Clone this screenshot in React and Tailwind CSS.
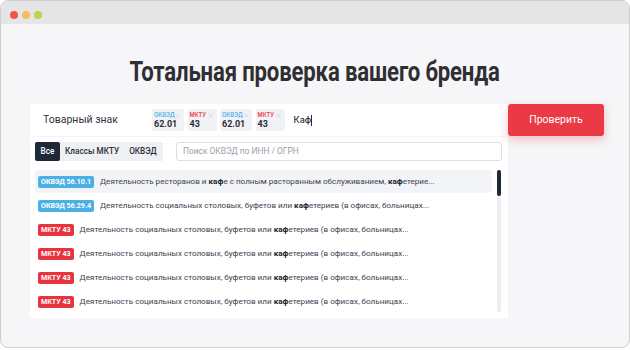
import { X } from 'lucide-react'

const CHIPS = [
  { type: 'ОКВЭД', code: '62.01', color: 'text-[#4cb0e6]', w: 'w-[32px]' },
  { type: 'МКТУ', code: '43', color: 'text-[#ec3a4a]', w: 'w-[29px]' },
  { type: 'ОКВЭД', code: '62.01', color: 'text-[#4cb0e6]', w: 'w-[32px]' },
  { type: 'МКТУ', code: '43', color: 'text-[#ec3a4a]', w: 'w-[29px]' },
]

const SOCIAL = ['Деятельность социальных столовых, буфетов или ', 'етериев (в офисах, больницах...']

const ROWS = [
  {
    badge: 'ОКВЭД 56.10.1',
    kind: 'okved',
    parts: ['Деятельность ресторанов и ', 'е с полным расторанным обслуживанием, ', 'етерие...'],
    active: true,
  },
  { badge: 'ОКВЭД 56.29.4', kind: 'okved', parts: SOCIAL },
  { badge: 'МКТУ 43', kind: 'mktu', parts: SOCIAL },
  { badge: 'МКТУ 43', kind: 'mktu', parts: SOCIAL },
  { badge: 'МКТУ 43', kind: 'mktu', parts: SOCIAL },
  { badge: 'МКТУ 43', kind: 'mktu', parts: SOCIAL },
]

function Row({ row }) {
  return (
    <div
      className={`flex items-center h-[23px] pl-[3px] rounded-[4px] mb-px font-['Roboto',sans-serif] ${row.active ? 'bg-[#f3f4f8]' : ''}`}
    >
      <span
        className={`h-[12px] px-[3px] rounded-[2px] text-white font-bold text-[7.1px] leading-[12px] whitespace-nowrap ${
          row.kind === 'okved' ? 'bg-[#4cb0e6]' : 'bg-[#e8343f]'
        }`}
      >
        {row.badge}
      </span>
      <span className="ml-[6px] text-[8.1px] text-[#3d4150] whitespace-nowrap">
        {row.parts.map((p, i) => (
          <span key={i}>
            {p}
            {i < row.parts.length - 1 && <b className="text-[#1c2230]">каф</b>}
          </span>
        ))}
      </span>
    </div>
  )
}

export default function App() {
  return (
    <div className="w-[630px] h-[350px] bg-white font-['Inter',sans-serif]">
      <div className="w-[630px] h-[348px] border border-[#cdcdcd] rounded-[8px] overflow-hidden bg-[#f6f6f8] flex flex-col">
        <div className="h-[23px] bg-[#e5e5e5] flex items-center gap-[4px] pl-[9px] pt-[4px] shrink-0">
          <span className="w-[8px] h-[8px] rounded-full bg-[#f0524f]" />
          <span className="w-[8px] h-[8px] rounded-full bg-[#f6bd5f]" />
          <span className="w-[8px] h-[8px] rounded-full bg-[#b5d84a]" />
        </div>

        <div className="h-[80px] flex items-center justify-center pt-[17px]">
          <h1 className="font-['Roboto',sans-serif] font-bold text-[27px] text-[#2f2f33] tracking-[-0.2px] scale-x-[0.82] whitespace-nowrap">
            Тотальная проверка вашего бренда
          </h1>
        </div>

        <div className="flex ml-[29px]">
          <div className="w-[478px]">
            <div className="h-[32px] bg-white flex items-center pl-[13px]">
              <span className="text-[10.5px] text-[#2f323a] w-[109px] font-['Roboto',sans-serif]">Товарный знак</span>
              <div className="flex gap-[3.5px] items-center">
                {CHIPS.map((c, i) => (
                  <div key={i} className={`bg-[#f1f2f6] rounded-[3px] h-[22px] pl-[2px] pr-[3px] pt-[2px] flex flex-col ${c.w}`}>
                    <div className="flex items-center justify-between">
                      <span className={`text-[5.6px] font-semibold leading-[8px] ${c.color}`}>{c.type}</span>
                      <X size={7} strokeWidth={1.5} className="text-[#b5b8c2]" />
                    </div>
                    <span className="text-[9px] font-bold text-[#2a2d36] leading-[11px] font-['Roboto',sans-serif]">{c.code}</span>
                  </div>
                ))}
              </div>
              <span className="ml-[9px] text-[9px] text-[#2a2d36] font-medium">Каф</span>
              <span className="w-px h-[11px] bg-[#2a2d36]" />
            </div>

            <div className="bg-white mt-px h-[181px] px-[5px] pt-[5px]">
              <div className="flex items-center">
                <div className="flex items-center h-[19px] w-[128px] bg-[#eef0f4] rounded-[2px] text-[8.2px] text-[#2a2d36] font-medium font-['Roboto',sans-serif] whitespace-nowrap">
                  <span className="h-[19px] w-[25px] bg-[#1d2839] text-white rounded-[2px] leading-[19px] text-center">Все</span>
                  <span className="ml-[5px]">Классы МКТУ</span>
                  <span className="ml-[10px]">ОКВЭД</span>
                </div>
                <div className="ml-[13px] w-[326px] h-[19px] border border-[#dcdee3] rounded-[3px] flex items-center pl-[6px] text-[8.4px] text-[#9a9ea8] font-['Roboto',sans-serif]">
                  Поиск ОКВЭД по ИНН / ОГРН
                </div>
              </div>

              <div className="flex mt-[9px]">
                <div className="w-[457px]">
                  {ROWS.map((r, i) => (
                    <Row key={i} row={r} />
                  ))}
                </div>
                <div className="ml-[5px] w-[4px] h-[142px] rounded-full bg-[#eceef2]">
                  <div className="h-[26px] rounded-full bg-[#1d2839]" />
                </div>
              </div>
            </div>
          </div>

          <button className="w-[96px] h-[32px] bg-[#ec3946] text-white text-[10.5px] rounded-[3px] shadow-[0_4px_10px_rgba(236,57,70,0.3)] font-['Roboto',sans-serif]">
            Проверить
          </button>
        </div>
      </div>
    </div>
  )
}
